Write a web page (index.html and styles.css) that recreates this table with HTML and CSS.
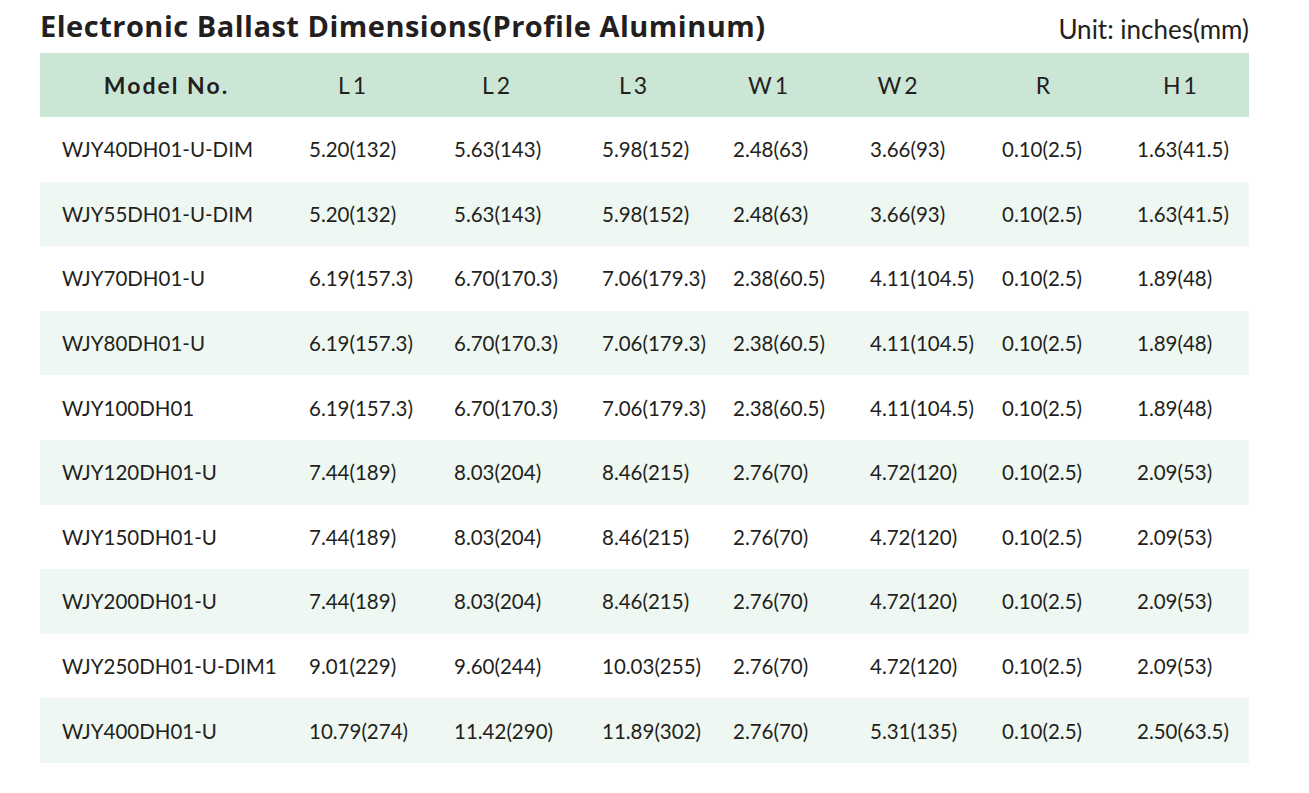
FILE: index.html
```html
<!DOCTYPE html>
<html lang="en">
<head>
<meta charset="utf-8">
<title>Electronic Ballast Dimensions</title>
<link rel="stylesheet" href="styles.css">
</head>
<body>
<div class="page">
  <div class="top">
    <h1 class="title">Electronic Ballast Dimensions(Profile Aluminum)</h1>
    <span class="unit">Unit: inches(mm)</span>
  </div>
  <div class="table">
    <div class="row head">
      <div class="cell model">Model No.</div>
      <div class="cell">L1</div>
      <div class="cell">L2</div>
      <div class="cell">L3</div>
      <div class="cell">W1</div>
      <div class="cell">W2</div>
      <div class="cell">R</div>
      <div class="cell">H1</div>
    </div>
    <div class="row">
      <div class="cell">WJY40DH01-U-DIM</div><div class="cell">5.20(132)</div><div class="cell">5.63(143)</div><div class="cell">5.98(152)</div><div class="cell">2.48(63)</div><div class="cell">3.66(93)</div><div class="cell">0.10(2.5)</div><div class="cell">1.63(41.5)</div>
    </div>
    <div class="row">
      <div class="cell">WJY55DH01-U-DIM</div><div class="cell">5.20(132)</div><div class="cell">5.63(143)</div><div class="cell">5.98(152)</div><div class="cell">2.48(63)</div><div class="cell">3.66(93)</div><div class="cell">0.10(2.5)</div><div class="cell">1.63(41.5)</div>
    </div>
    <div class="row">
      <div class="cell">WJY70DH01-U</div><div class="cell">6.19(157.3)</div><div class="cell">6.70(170.3)</div><div class="cell">7.06(179.3)</div><div class="cell">2.38(60.5)</div><div class="cell">4.11(104.5)</div><div class="cell">0.10(2.5)</div><div class="cell">1.89(48)</div>
    </div>
    <div class="row">
      <div class="cell">WJY80DH01-U</div><div class="cell">6.19(157.3)</div><div class="cell">6.70(170.3)</div><div class="cell">7.06(179.3)</div><div class="cell">2.38(60.5)</div><div class="cell">4.11(104.5)</div><div class="cell">0.10(2.5)</div><div class="cell">1.89(48)</div>
    </div>
    <div class="row">
      <div class="cell">WJY100DH01</div><div class="cell">6.19(157.3)</div><div class="cell">6.70(170.3)</div><div class="cell">7.06(179.3)</div><div class="cell">2.38(60.5)</div><div class="cell">4.11(104.5)</div><div class="cell">0.10(2.5)</div><div class="cell">1.89(48)</div>
    </div>
    <div class="row">
      <div class="cell">WJY120DH01-U</div><div class="cell">7.44(189)</div><div class="cell">8.03(204)</div><div class="cell">8.46(215)</div><div class="cell">2.76(70)</div><div class="cell">4.72(120)</div><div class="cell">0.10(2.5)</div><div class="cell">2.09(53)</div>
    </div>
    <div class="row">
      <div class="cell">WJY150DH01-U</div><div class="cell">7.44(189)</div><div class="cell">8.03(204)</div><div class="cell">8.46(215)</div><div class="cell">2.76(70)</div><div class="cell">4.72(120)</div><div class="cell">0.10(2.5)</div><div class="cell">2.09(53)</div>
    </div>
    <div class="row">
      <div class="cell">WJY200DH01-U</div><div class="cell">7.44(189)</div><div class="cell">8.03(204)</div><div class="cell">8.46(215)</div><div class="cell">2.76(70)</div><div class="cell">4.72(120)</div><div class="cell">0.10(2.5)</div><div class="cell">2.09(53)</div>
    </div>
    <div class="row">
      <div class="cell">WJY250DH01-U-DIM1</div><div class="cell">9.01(229)</div><div class="cell">9.60(244)</div><div class="cell">10.03(255)</div><div class="cell">2.76(70)</div><div class="cell">4.72(120)</div><div class="cell">0.10(2.5)</div><div class="cell">2.09(53)</div>
    </div>
    <div class="row">
      <div class="cell">WJY400DH01-U</div><div class="cell">10.79(274)</div><div class="cell">11.42(290)</div><div class="cell">11.89(302)</div><div class="cell">2.76(70)</div><div class="cell">5.31(135)</div><div class="cell">0.10(2.5)</div><div class="cell">2.50(63.5)</div>
    </div>
  </div>
</div>
</body>
</html>
```

FILE: styles.css
```css
* {
  box-sizing: border-box;
}

html, body {
  margin: 0;
  padding: 0;
  background: #ffffff;
}

body {
  font-family: "Lato", "Open Sans", "Liberation Sans", sans-serif;
  color: #231f20;
}

.page {
  width: 1309px;
  padding: 0 60px 0 40px;
}

.top {
  display: flex;
  justify-content: space-between;
  align-items: flex-end;
  height: 53px;
  padding-bottom: 9px;
}

.title {
  margin: 0;
  font-family: "Open Sans", "Lato", "Liberation Sans", sans-serif;
  font-size: 29px;
  font-weight: 700;
  line-height: 34px;
  letter-spacing: 0.5px;
  margin-bottom: 1px;
}

.unit {
  font-size: 26px;
  line-height: 34px;
  margin-bottom: -2px;
}

.table {
  display: flex;
  flex-direction: column;
}

.row {
  display: grid;
  grid-template-columns: 253px 145px 148px 131px 137px 132px 135px 128px;
  height: 64.6px;
  align-items: center;
  font-size: 20.5px;
}

.row:nth-child(odd) {
  background: #eef7f1;
}

.row .cell {
  padding-left: 16px;
  white-space: nowrap;
}

.row .cell:first-child {
  padding-left: 22px;
}

.row.head {
  height: 64px;
  background: #cce6d6;
  font-size: 23px;
  letter-spacing: 3px;
}

.row.head .cell {
  padding-left: 0;
  text-align: center;
}

.row.head .cell.model {
  font-weight: 700;
  letter-spacing: 2px;
}

.row.head .cell:nth-child(2) { padding-right: 24px; }
.row.head .cell:nth-child(3) { padding-right: 29px; }
.row.head .cell:nth-child(4) { padding-right: 34px; }
.row.head .cell:nth-child(5) { padding-right: 32px; }
.row.head .cell:nth-child(6) { padding-right: 42px; }
.row.head .cell:nth-child(7) { padding-right: 18px; }
.row.head .cell:nth-child(8) { padding-right: 7px; }
```
